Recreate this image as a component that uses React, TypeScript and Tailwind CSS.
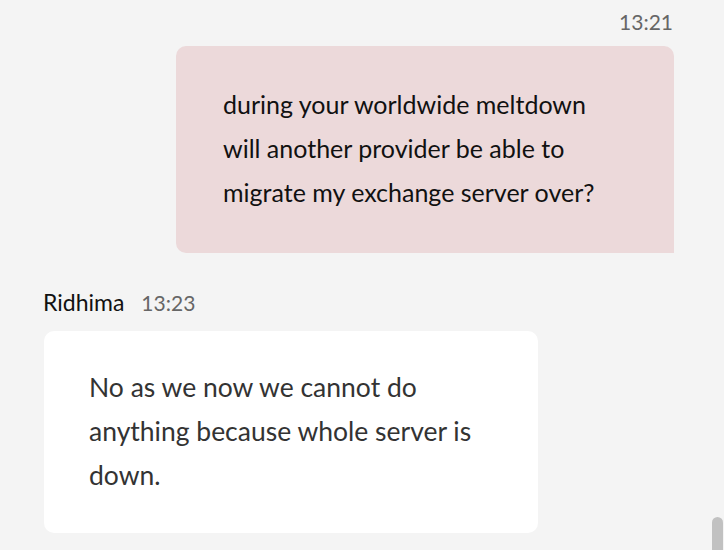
import React from 'react';

const font = { fontFamily: 'Lato, "Liberation Sans", sans-serif' };

export default function App() {
  return (
    <div className="relative h-[550px] w-full overflow-hidden bg-[#f4f4f4]" style={font}>
      {/* outgoing */}
      <div className="pt-[8px] pr-[50px] flex flex-col items-end">
        <span className="text-[21px] leading-[28px] text-[#666666] pr-[1px]">13:21</span>
        <div className="mt-[10px] w-[498px] rounded-[10px] rounded-br-none bg-[#ecd9da] pl-[47px] pr-[30px] pt-[36px] pb-[39px]">
          <p className="text-[25px] leading-[44px] text-[#111111]">
            during your worldwide meltdown
            <br />
            will another provider be able to
            <br />
            migrate my exchange server over?
          </p>
        </div>
      </div>

      {/* incoming */}
      <div className="mt-[35px] pl-[43px]">
        <div className="flex items-baseline gap-[17px]">
          <span className="text-[23px] leading-[28px] text-[#111111]">Ridhima</span>
          <span className="text-[21px] leading-[28px] text-[#666666]">13:23</span>
        </div>
        <div className="mt-[14px] ml-[1px] w-[494px] rounded-[10px] bg-white pl-[45px] pr-[20px] pt-[34px] pb-[36px]">
          <p className="text-[26.5px] leading-[44px] text-[#333333]">
            No as we now we cannot do
            <br />
            anything because whole server is
            <br />
            down.
          </p>
        </div>
      </div>

      <div className="absolute right-[1px] top-[517px] h-[48px] w-[11px] rounded-full bg-[#c1c1c1]" />
    </div>
  );
}
